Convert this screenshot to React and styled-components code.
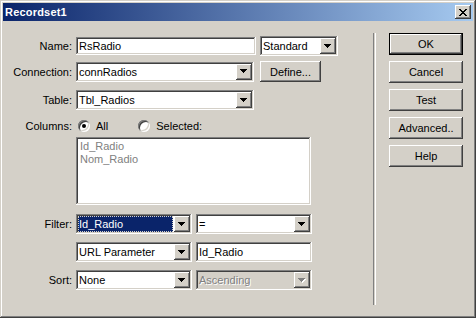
import React from "react";
import styled, { createGlobalStyle, css } from "styled-components";

const GlobalStyle = createGlobalStyle`
  html, body {
    margin: 0;
    padding: 0;
    background: #d4d0c8;
  }
  body {
    font-family: "Liberation Sans", Arial, sans-serif;
    font-size: 11px;
    color: #000;
  }
`;

const raised = css`
  background: #d4d0c8;
  box-shadow: inset -1px -1px #404040, inset 1px 1px #fff,
    inset -2px -2px #808080, inset 2px 2px #d4d0c8;
`;

const sunken = css`
  box-shadow: inset -1px -1px #fff, inset 1px 1px #808080,
    inset -2px -2px #d4d0c8, inset 2px 2px #404040;
`;

const Window = styled.div`
  width: 476px;
  height: 318px;
  box-sizing: border-box;
  padding: 3px;
  background: #d4d0c8;
  box-shadow: inset -1px -1px #404040, inset 1px 1px #d4d0c8,
    inset -2px -2px #808080, inset 2px 2px #fff;
  display: flex;
  flex-direction: column;
`;

const TitleBar = styled.div`
  height: 18px;
  display: flex;
  align-items: center;
  justify-content: space-between;
  padding: 0 2px;
  background: linear-gradient(to right, #0a246a, #a6caf0);
`;

const TitleText = styled.span`
  color: #fff;
  font-weight: bold;
  font-size: 11px;
  letter-spacing: 0.2px;
`;

const CloseBtn = styled.div`
  ${raised};
  width: 16px;
  height: 14px;
  display: flex;
  align-items: center;
  justify-content: center;
`;

const Body = styled.div`
  flex: 1;
  display: flex;
`;

const Form = styled.div`
  width: 370px;
  display: flex;
  flex-direction: column;
`;

const Row = styled.div`
  display: grid;
  grid-template-columns: 69px auto;
  column-gap: 4px;
  align-items: center;
  margin-top: ${(p) => p.$mt}px;
  min-height: ${(p) => p.$h || 20}px;
`;

const Label = styled.span`
  text-align: right;
`;

const Controls = styled.div`
  display: flex;
  align-items: center;
  gap: ${(p) => p.$gap ?? 4}px;
`;

const Field = styled.div`
  ${sunken};
  background: #fff;
  box-sizing: border-box;
  width: ${(p) => p.$w}px;
  height: ${(p) => p.$h || 20}px;
  padding: 0 3px;
  display: flex;
  align-items: center;
`;

const ComboBox = styled.div`
  ${sunken};
  background: ${(p) => (p.$disabled ? "#d4d0c8" : "#fff")};
  box-sizing: border-box;
  width: ${(p) => p.$w}px;
  height: 20px;
  padding: 2px;
  display: flex;
  align-items: stretch;
`;

const ComboText = styled.div`
  flex: 1;
  display: flex;
  align-items: center;
  padding-left: 1px;
  margin-right: 1px;
  ${(p) =>
    p.$selected &&
    css`
      background: #0a246a;
      color: #fff;
      outline: 1px dotted #d4d0c8;
      outline-offset: -1px;
    `}
  ${(p) =>
    p.$disabled &&
    css`
      color: #808080;
      text-shadow: 1px 1px #fff;
    `}
`;

const DropBtn = styled.div`
  ${raised};
  width: 16px;
  display: flex;
  align-items: center;
  justify-content: center;
`;

const Button = styled.div`
  ${raised};
  box-sizing: border-box;
  width: ${(p) => p.$w || 74}px;
  height: ${(p) => p.$h || 22}px;
  display: flex;
  align-items: center;
  justify-content: center;
  ${(p) =>
    p.$default &&
    css`
      box-shadow: inset -1px -1px #000, inset 1px 1px #000,
        inset -2px -2px #404040, inset 2px 2px #fff,
        inset -3px -3px #808080;
    `}
`;

const RadioGroup = styled.div`
  display: flex;
  align-items: center;
  margin-left: 2px;
`;

const Radio = styled.span`
  width: 12px;
  height: 12px;
  border-radius: 50%;
  background: #fff;
  box-shadow: inset 1px 1px #808080, inset -1px -1px #fff,
    inset 2px 2px #404040, inset -2px -2px #d4d0c8;
  display: flex;
  align-items: center;
  justify-content: center;
  margin-right: 6px;
  &::after {
    content: "";
    width: 4px;
    height: 4px;
    border-radius: 50%;
    background: ${(p) => (p.$checked ? "#000" : "transparent")};
  }
`;

const RadioLabel = styled.span`
  margin-right: ${(p) => p.$mr || 0}px;
`;

const ListBox = styled.div`
  ${sunken};
  background: #fff;
  box-sizing: border-box;
  width: 235px;
  height: 68px;
  padding: 3px 4px;
  color: #808080;
  line-height: 13px;
`;

const Separator = styled.div`
  width: 1px;
  margin: 12px 0 10px;
  border-left: 1px solid #808080;
  border-right: 1px solid #fff;
`;

const ButtonCol = styled.div`
  margin-left: 13px;
  padding-top: 12px;
  display: flex;
  flex-direction: column;
  gap: 6px;
`;

function Arrow({ disabled }) {
  return (
    <svg width="8" height="5" viewBox="0 0 8 5" shapeRendering="crispEdges">
      {disabled && (
        <path d="M1 1h7v1H1z M2 2h5v1H2z M3 3h3v1H3z M4 4h1v1H4z" fill="#fff" />
      )}
      <path
        d="M0 0h7v1H0z M1 1h5v1H1z M2 2h3v1H2z M3 3h1v1H3z"
        fill={disabled ? "#808080" : "#000"}
      />
    </svg>
  );
}

function Combo({ w, children, selected, disabled }) {
  return (
    <ComboBox $w={w} $disabled={disabled}>
      <ComboText $selected={selected} $disabled={disabled}>
        {children}
      </ComboText>
      <DropBtn>
        <Arrow disabled={disabled} />
      </DropBtn>
    </ComboBox>
  );
}

export default function App() {
  return (
    <>
      <GlobalStyle />
      <Window>
        <TitleBar>
          <TitleText>Recordset1</TitleText>
          <CloseBtn>
            <svg width="8" height="7" viewBox="0 0 8 7" shapeRendering="crispEdges">
              <path
                d="M0 0h2v1H0z M6 0h2v1H6z M1 1h2v1H1z M5 1h2v1H5z M2 2h4v1H2z M3 3h2v1H3z M2 4h4v1H2z M1 5h2v1H1z M5 5h2v1H5z M0 6h2v1H0z M6 6h2v1H6z"
                fill="#000"
              />
            </svg>
          </CloseBtn>
        </TitleBar>
        <Body>
          <Form>
            <Row $mt={15}>
              <Label>Name:</Label>
              <Controls>
                <Field $w={180} $h={18}>RsRadio</Field>
                <Combo w={78}>Standard</Combo>
              </Controls>
            </Row>
            <Row $mt={5}>
              <Label>Connection:</Label>
              <Controls $gap={6}>
                <Combo w={178}>connRadios</Combo>
                <Button $w={61} $h={21}>Define...</Button>
              </Controls>
            </Row>
            <Row $mt={8}>
              <Label>Table:</Label>
              <Controls>
                <Combo w={178}>Tbl_Radios</Combo>
              </Controls>
            </Row>
            <Row $mt={6}>
              <Label>Columns:</Label>
              <RadioGroup>
                <Radio $checked />
                <RadioLabel $mr={30}>All</RadioLabel>
                <Radio />
                <RadioLabel>Selected:</RadioLabel>
              </RadioGroup>
            </Row>
            <Row $mt={1} $h={68}>
              <span />
              <ListBox>
                <div>Id_Radio</div>
                <div>Nom_Radio</div>
              </ListBox>
            </Row>
            <Row $mt={9}>
              <Label>Filter:</Label>
              <Controls>
                <Combo w={116} selected>Id_Radio</Combo>
                <Combo w={116}>=</Combo>
              </Controls>
            </Row>
            <Row $mt={8}>
              <span />
              <Controls>
                <Combo w={116}>URL Parameter</Combo>
                <Field $w={116}>Id_Radio</Field>
              </Controls>
            </Row>
            <Row $mt={8}>
              <Label>Sort:</Label>
              <Controls>
                <Combo w={116}>None</Combo>
                <Combo w={116} disabled>Ascending</Combo>
              </Controls>
            </Row>
          </Form>
          <Separator />
          <ButtonCol>
            <Button $default>OK</Button>
            <Button>Cancel</Button>
            <Button>Test</Button>
            <Button>Advanced..</Button>
            <Button>Help</Button>
          </ButtonCol>
        </Body>
      </Window>
    </>
  );
}
